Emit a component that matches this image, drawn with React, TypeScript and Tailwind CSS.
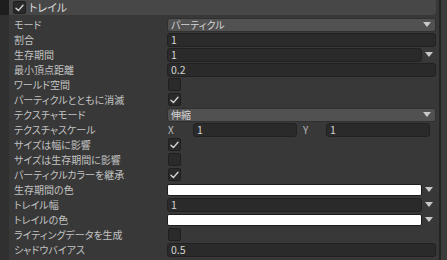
import React from 'react';

const font = "font-['Noto_Sans_CJK_JP','Noto_Sans',sans-serif] [font-feature-settings:'palt']";

const Check: React.FC = () => (
  <svg width="9" height="8" viewBox="0 0 9 8" fill="none">
    <polyline points="1,4.2 3.4,6.6 8,1.2" stroke="#d6d6d6" strokeWidth="1.4" strokeLinecap="round" strokeLinejoin="round" />
  </svg>
);

const Checkbox: React.FC<{ checked?: boolean }> = ({ checked }) => (
  <div className="w-[13px] h-[13px] ml-[1px] rounded-[2px] bg-[#2a2a2a] border border-[#1f1f1f] flex items-center justify-center">
    {checked && <Check />}
  </div>
);

const Arrow: React.FC = () => (
  <svg width="8" height="5" viewBox="0 0 8 5">
    <polygon points="0,0 8,0 4,5" fill="#c8c8c8" />
  </svg>
);

const Field: React.FC<{ value?: string; className?: string }> = ({ value, className }) => (
  <div className={`h-[14px] rounded-[3px] bg-[#2a2a2a] border border-[#212121] flex items-center px-[3px] text-[10.5px] text-[#d2d2d2] ${className ?? 'flex-1'}`}>
    {value}
  </div>
);

const Popup: React.FC<{ value: string }> = ({ value }) => (
  <div className="flex-1 h-[14px] rounded-[3px] bg-[#515151] border border-[#303030] flex items-center justify-between pl-[3px] pr-[4px] text-[10px] text-[#d4d4d4]">
    <span>{value}</span>
    <Arrow />
  </div>
);

const WithArrow: React.FC<{ children: React.ReactNode }> = ({ children }) => (
  <div className="flex-1 flex items-center">
    <div className="flex-1 flex">{children}</div>
    <div className="w-[14px] flex justify-center"><Arrow /></div>
  </div>
);

const Color: React.FC = () => (
  <div className="flex-1 h-[12px] rounded-[2px] bg-white border border-[#1c1c1c]" />
);

const Row: React.FC<{ label: string; children?: React.ReactNode }> = ({ label, children }) => (
  <div className="h-[15px] flex items-center">
    <div className="w-[158px] pl-[5px] text-[10px] text-[#c2c2c2] whitespace-nowrap leading-none">{label}</div>
    <div className="flex-1 flex items-center">{children}</div>
  </div>
);

export default function App() {
  return (
    <div className={`w-[447px] h-[260px] overflow-hidden flex bg-[#383838] ${font}`}>
      <div className="w-[9px] flex flex-col">
        <div className="h-[15px] bg-[#1e1e1e]" />
        <div className="flex-1 bg-[#303030]" />
      </div>
      <div className="w-[430px] pr-[3px] flex flex-col">
        <div className="h-[15px] bg-[#474747] rounded-br-[4px] flex items-center gap-[3px] pl-[3px] mb-[2px]">
          <Checkbox checked />
          <span className="text-[11px] text-[#d8d8d8] leading-none">トレイル</span>
        </div>
        <Row label="モード"><Popup value="パーティクル" /></Row>
        <Row label="割合"><Field value="1" /></Row>
        <Row label="生存期間"><WithArrow><Field value="1" /></WithArrow></Row>
        <Row label="最小頂点距離"><Field value="0.2" /></Row>
        <Row label="ワールド空間"><Checkbox /></Row>
        <Row label="パーティクルとともに消滅"><Checkbox checked /></Row>
        <Row label="テクスチャモード"><Popup value="伸縮" /></Row>
        <Row label="テクスチャスケール">
          <span className="w-[26px] pl-[1px] text-[10px] text-[#b8b8b8]">X</span>
          <Field value="1" className="w-[104px]" />
          <span className="w-[29px] pl-[6px] text-[10px] text-[#b8b8b8]">Y</span>
          <Field value="1" className="w-[104px]" />
          <div className="flex-1" />
        </Row>
        <Row label="サイズは幅に影響"><Checkbox checked /></Row>
        <Row label="サイズは生存期間に影響"><Checkbox /></Row>
        <Row label="パーティクルカラーを継承"><Checkbox checked /></Row>
        <Row label="生存期間の色"><WithArrow><Color /></WithArrow></Row>
        <Row label="トレイル幅"><WithArrow><Field value="1" /></WithArrow></Row>
        <Row label="トレイルの色"><WithArrow><Color /></WithArrow></Row>
        <Row label="ライティングデータを生成"><Checkbox /></Row>
        <Row label="シャドウバイアス"><Field value="0.5" /></Row>
      </div>
      <div className="w-[2px] bg-[#242424]" />
      <div className="flex-1 bg-[#3c3c3c]" />
    </div>
  );
}
